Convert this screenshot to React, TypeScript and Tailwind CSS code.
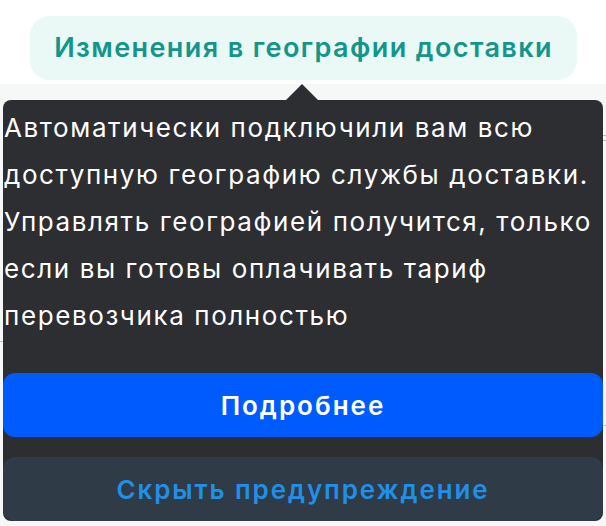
import React from "react";

const lines = [
  "Автоматически подключили вам всю",
  "доступную географию службы доставки.",
  "Управлять географией получится, только",
  "если вы готовы оплачивать тариф",
  "перевозчика полностью",
];

export default function App() {
  return (
    <div className="w-[606px] h-[526px] overflow-hidden bg-white relative" style={{ fontFamily: "Inter, 'Noto Sans', sans-serif" }}>
      <div className="pt-4 pl-[30px]">
        <div className="w-[547px] h-16 rounded-[20px] bg-[#eaf8f6] flex items-center justify-center text-[#14958a] text-[27px] font-semibold tracking-[1.4px]">
          Изменения в географии доставки
        </div>
      </div>
      <div className="mt-1 h-[442px] bg-[#f6f7f7] flex justify-between">
        <div className="w-[12px] flex flex-col">
          <div className="h-[258px] border-b border-[#b8bcc0]"></div>
        </div>
        <div className="w-[12px] flex flex-col">
          <div className="h-[52px] border-b border-[#b8bcc0]"></div>
          <div className="h-[5px] border-b border-[#b8bcc0]"></div>
          <div className="h-[285px] border-b border-[#c9cccf]"></div>
        </div>
      </div>

      <div className="absolute left-[3px] top-[100px] w-[600px] h-[421px] rounded-[8px] bg-[#2d2e32] flex flex-col">
        <div className="absolute left-[282px] -top-[16px] w-0 h-0 border-l-[17px] border-r-[17px] border-b-[17px] border-l-transparent border-r-transparent border-b-[#2d2e32]"></div>
        <div className="pl-[1px] pt-[4px] text-white text-[26px] leading-[47px] tracking-[1.6px]">
          {lines.map((l) => (
            <div key={l} className="whitespace-nowrap">{l}</div>
          ))}
        </div>
        <div className="mt-[34px] flex flex-col gap-5">
          <div className="h-16 rounded-[12px] bg-[#005bff] flex items-center justify-center text-white text-[26px] font-semibold tracking-[2px]">
            Подробнее
          </div>
          <div className="h-16 rounded-[12px] bg-[#2f3b47] flex items-center justify-center text-[#1f8fe8] text-[26px] font-semibold tracking-[1.9px]">
            Скрыть предупреждение
          </div>
        </div>
      </div>
    </div>
  );
}
